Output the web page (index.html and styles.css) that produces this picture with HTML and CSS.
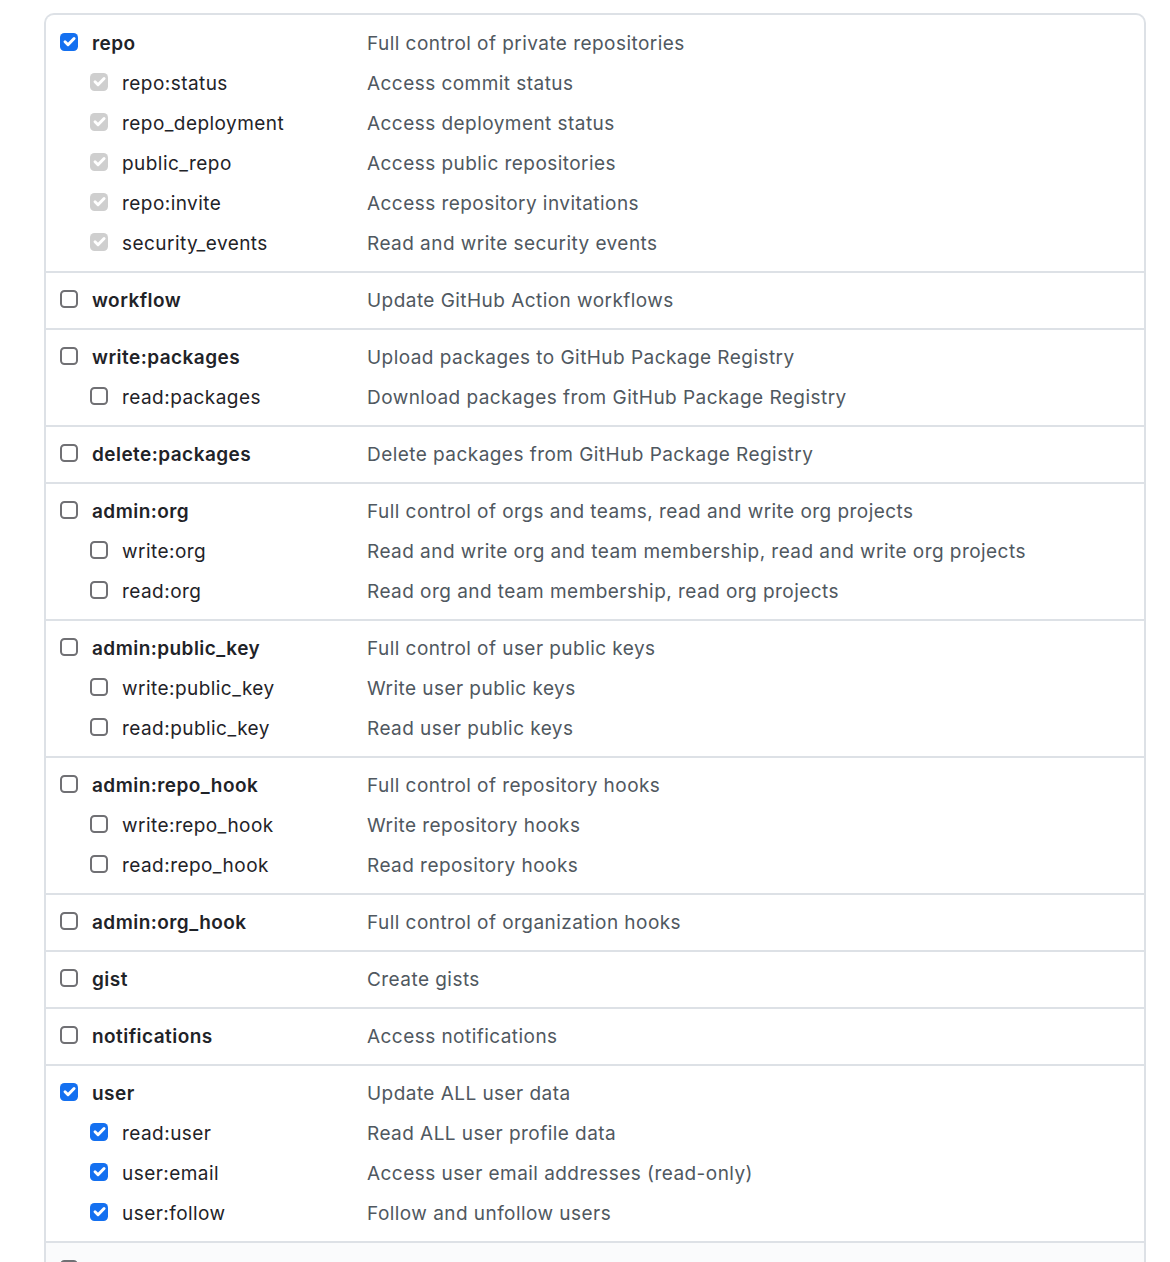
FILE: index.html
```html
<!DOCTYPE html>
<html>
<head>
<meta charset="utf-8">
<link rel="stylesheet" href="styles.css">
</head>
<body>
<div class="scopes">
  <div class="group">
    <div class="row"><div class="name top"><span class="cb on"><svg viewBox="0 0 16 16"><path d="M3.8 8.3l2.8 2.8L12.3 5.2"/></svg></span><span class="lbl">repo</span></div><div class="desc">Full control of private repositories</div></div>
    <div class="row"><div class="name sub"><span class="cb dis"><svg viewBox="0 0 16 16"><path d="M3.8 8.3l2.8 2.8L12.3 5.2"/></svg></span><span class="lbl">repo:status</span></div><div class="desc">Access commit status</div></div>
    <div class="row"><div class="name sub"><span class="cb dis"><svg viewBox="0 0 16 16"><path d="M3.8 8.3l2.8 2.8L12.3 5.2"/></svg></span><span class="lbl">repo_deployment</span></div><div class="desc">Access deployment status</div></div>
    <div class="row"><div class="name sub"><span class="cb dis"><svg viewBox="0 0 16 16"><path d="M3.8 8.3l2.8 2.8L12.3 5.2"/></svg></span><span class="lbl">public_repo</span></div><div class="desc">Access public repositories</div></div>
    <div class="row"><div class="name sub"><span class="cb dis"><svg viewBox="0 0 16 16"><path d="M3.8 8.3l2.8 2.8L12.3 5.2"/></svg></span><span class="lbl">repo:invite</span></div><div class="desc">Access repository invitations</div></div>
    <div class="row"><div class="name sub"><span class="cb dis"><svg viewBox="0 0 16 16"><path d="M3.8 8.3l2.8 2.8L12.3 5.2"/></svg></span><span class="lbl">security_events</span></div><div class="desc">Read and write security events</div></div>
  </div>
  <div class="group">
    <div class="row"><div class="name top"><span class="cb"></span><span class="lbl">workflow</span></div><div class="desc">Update GitHub Action workflows</div></div>
  </div>
  <div class="group">
    <div class="row"><div class="name top"><span class="cb"></span><span class="lbl">write:packages</span></div><div class="desc">Upload packages to GitHub Package Registry</div></div>
    <div class="row"><div class="name sub"><span class="cb"></span><span class="lbl">read:packages</span></div><div class="desc">Download packages from GitHub Package Registry</div></div>
  </div>
  <div class="group">
    <div class="row"><div class="name top"><span class="cb"></span><span class="lbl">delete:packages</span></div><div class="desc">Delete packages from GitHub Package Registry</div></div>
  </div>
  <div class="group">
    <div class="row"><div class="name top"><span class="cb"></span><span class="lbl">admin:org</span></div><div class="desc">Full control of orgs and teams, read and write org projects</div></div>
    <div class="row"><div class="name sub"><span class="cb"></span><span class="lbl">write:org</span></div><div class="desc">Read and write org and team membership, read and write org projects</div></div>
    <div class="row"><div class="name sub"><span class="cb"></span><span class="lbl">read:org</span></div><div class="desc">Read org and team membership, read org projects</div></div>
  </div>
  <div class="group">
    <div class="row"><div class="name top"><span class="cb"></span><span class="lbl">admin:public_key</span></div><div class="desc">Full control of user public keys</div></div>
    <div class="row"><div class="name sub"><span class="cb"></span><span class="lbl">write:public_key</span></div><div class="desc">Write user public keys</div></div>
    <div class="row"><div class="name sub"><span class="cb"></span><span class="lbl">read:public_key</span></div><div class="desc">Read user public keys</div></div>
  </div>
  <div class="group">
    <div class="row"><div class="name top"><span class="cb"></span><span class="lbl">admin:repo_hook</span></div><div class="desc">Full control of repository hooks</div></div>
    <div class="row"><div class="name sub"><span class="cb"></span><span class="lbl">write:repo_hook</span></div><div class="desc">Write repository hooks</div></div>
    <div class="row"><div class="name sub"><span class="cb"></span><span class="lbl">read:repo_hook</span></div><div class="desc">Read repository hooks</div></div>
  </div>
  <div class="group">
    <div class="row"><div class="name top"><span class="cb"></span><span class="lbl">admin:org_hook</span></div><div class="desc">Full control of organization hooks</div></div>
  </div>
  <div class="group">
    <div class="row"><div class="name top"><span class="cb"></span><span class="lbl">gist</span></div><div class="desc">Create gists</div></div>
  </div>
  <div class="group">
    <div class="row"><div class="name top"><span class="cb"></span><span class="lbl">notifications</span></div><div class="desc">Access notifications</div></div>
  </div>
  <div class="group">
    <div class="row"><div class="name top"><span class="cb on"><svg viewBox="0 0 16 16"><path d="M3.8 8.3l2.8 2.8L12.3 5.2"/></svg></span><span class="lbl">user</span></div><div class="desc">Update ALL user data</div></div>
    <div class="row"><div class="name sub"><span class="cb on"><svg viewBox="0 0 16 16"><path d="M3.8 8.3l2.8 2.8L12.3 5.2"/></svg></span><span class="lbl">read:user</span></div><div class="desc">Read ALL user profile data</div></div>
    <div class="row"><div class="name sub"><span class="cb on"><svg viewBox="0 0 16 16"><path d="M3.8 8.3l2.8 2.8L12.3 5.2"/></svg></span><span class="lbl">user:email</span></div><div class="desc">Access user email addresses (read-only)</div></div>
    <div class="row"><div class="name sub"><span class="cb on"><svg viewBox="0 0 16 16"><path d="M3.8 8.3l2.8 2.8L12.3 5.2"/></svg></span><span class="lbl">user:follow</span></div><div class="desc">Follow and unfollow users</div></div>
  </div>
  <div class="group hover">
    <div class="row"><div class="name top"><span class="cb"></span><span class="lbl">delete_repo</span></div><div class="desc">Delete repositories</div></div>
  </div>
</div>
</body>
</html>
```

FILE: styles.css
```css
html, body {
  margin: 0;
  padding: 0;
  background: #ffffff;
}
body {
  font-family: Inter, "Noto Sans", "Liberation Sans", sans-serif;
  font-size: 19px;
  color: #1f2328;
  overflow: hidden;
}
.scopes {
  margin: 13px 0 0 44px;
  width: 1102px;
  box-sizing: border-box;
  border: 2px solid #dde1e6;
  border-bottom: none;
  border-radius: 10px 10px 0 0;
  background: #ffffff;
}
.group {
  padding: 7.5px 0;
  border-top: 2px solid #dde1e6;
}
.group:first-child {
  border-top: none;
  padding-top: 8px;
}
.group.hover {
  background: #fafbfc;
}
.row {
  display: grid;
  grid-template-columns: 307px 1fr;
  height: 40px;
  align-items: center;
  padding-left: 14px;
}
.name {
  display: flex;
  align-items: center;
  gap: 14px;
}
.name.sub {
  padding-left: 30px;
}
.name.top .lbl {
  font-weight: 600;
}
.lbl {
  letter-spacing: 0.45px;
}
.desc {
  color: #505860;
  letter-spacing: 0.45px;
}
.cb {
  width: 18px;
  height: 18px;
  margin-top: -3px;
  box-sizing: border-box;
  border: 2px solid #707074;
  border-radius: 4.5px;
  background: #fff;
  flex: none;
  display: flex;
  align-items: center;
  justify-content: center;
}
.cb svg {
  width: 17px;
  height: 17px;
  fill: none;
  stroke: #ffffff;
  stroke-width: 2.8;
  stroke-linecap: round;
  stroke-linejoin: round;
}
.cb.on {
  border: none;
  background: #1470f0;
}
.cb.dis {
  border: none;
  background: #cfcfcf;
}
```
